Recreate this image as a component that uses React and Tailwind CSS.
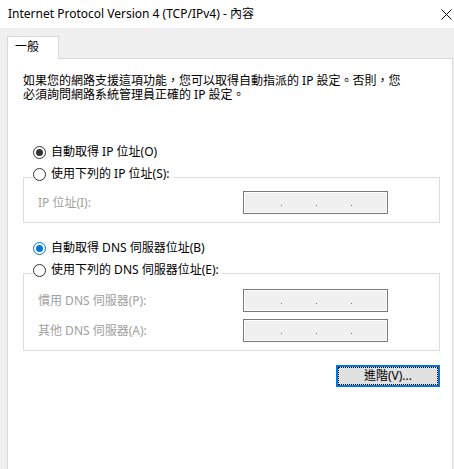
import React from "react";

const font = { fontFamily: '"Noto Sans", "Noto Sans CJK TC", sans-serif' };

const Radio = ({ checked, tone = "dark" }) => {
  const ring = tone === "blue" ? "border-[#0078d7]" : "border-[#333333]";
  const dot = tone === "blue" ? "bg-[#0078d7]" : "bg-[#333333]";
  return (
    <span className={`w-[13px] h-[13px] rounded-full border ${ring} bg-white flex items-center justify-center shrink-0`}>
      {checked && <span className={`w-[7px] h-[7px] rounded-full ${dot}`} />}
    </span>
  );
};

const IpBox = () => (
  <div className="w-[145px] h-[23px] border border-[#7a7a7a] bg-[#f0f0f0] shadow-[inset_0_0_0_1px_#ffffff] flex items-start pt-[13px] pl-[37px] gap-[34px]">
    <span className="w-px h-px bg-[#6d6d6d]" />
    <span className="w-px h-px bg-[#6d6d6d]" />
    <span className="w-px h-px bg-[#6d6d6d]" />
  </div>
);

const FieldRow = ({ label, className = "" }) => (
  <div className={`flex items-center justify-between pl-[14px] pr-[51px] ${className}`}>
    <span className="text-[#a0a0a0] leading-[14px] whitespace-nowrap">{label}</span>
    <IpBox />
  </div>
);

const Legend = ({ children }) => (
  <div className="-mt-[12px] ml-[9px] self-start bg-white h-[16px] flex items-center gap-[5px] pr-[3px]">
    <Radio checked={false} />
    <span className="leading-[14px] whitespace-nowrap">{children}</span>
  </div>
);

const App = () => {
  return (
    <div className="w-[454px] h-[469px] bg-[#f0f0f0] flex flex-col overflow-hidden text-[12px] text-black" style={font}>
      <div className="h-[28px] bg-white flex items-center justify-between pl-[8px] pr-[1px] shrink-0">
        <span className="leading-[14px] whitespace-nowrap">Internet Protocol Version 4 (TCP/IPv4) - 內容</span>
        <svg width="11" height="11" viewBox="0 0 11 11" className="mr-[1px]">
          <path d="M0.5 0.5 L10.5 10.5 M10.5 0.5 L0.5 10.5" stroke="#000" strokeWidth="1" fill="none" />
        </svg>
      </div>

      <div className="flex-1 flex flex-col pl-[7px] pr-[1px] pt-[8px]">
        <div className="relative z-10 w-[52px] h-[23px] -mb-px border border-b-0 border-[#d9d9d9] bg-white pl-[7px] pt-[3px] leading-[14px]">
          一般
        </div>

        <div className="flex-1 flex flex-col border border-b-0 border-[#d9d9d9] bg-white">
          <div className="mt-[15px] ml-[15px] flex flex-col whitespace-nowrap">
            <div className="h-[14px] leading-[14px]">如果您的網路支援這項功能，您可以取得自動指派的 IP 設定。否則，您</div>
            <div className="h-[14px] leading-[14px]">必須詢問網路系統管理員正確的 IP 設定。</div>
          </div>

          <div className="mt-[42px] ml-[25px] h-[16px] flex items-center gap-[5px]">
            <Radio checked />
            <span className="leading-[14px]">自動取得 IP 位址(O)</span>
          </div>

          <div className="mt-[17px] ml-[15px] mr-[12px] border border-[#dcdcdc] pb-[8px] flex flex-col">
            <Legend>使用下列的 IP 位址(S):</Legend>
            <FieldRow label="IP 位址(I):" className="mt-[9px]" />
          </div>

          <div className="mt-[17px] ml-[25px] h-[16px] flex items-center gap-[5px]">
            <Radio checked tone="blue" />
            <span className="leading-[14px]">自動取得 DNS 伺服器位址(B)</span>
          </div>

          <div className="mt-[17px] ml-[15px] mr-[12px] border border-[#dcdcdc] pb-[8px] flex flex-col">
            <Legend>使用下列的 DNS 伺服器位址(E):</Legend>
            <FieldRow label="慣用 DNS 伺服器(P):" className="mt-[11px]" />
            <FieldRow label="其他 DNS 伺服器(A):" className="mt-[7px]" />
          </div>

          <div className="mt-[14px] mr-[12px] flex justify-end">
            <button className="w-[104px] h-[22px] border-2 border-[#0078d7] bg-[#e1e1e1] p-0">
              <div className="w-full h-full border border-dotted border-black flex items-center justify-center leading-[14px]">
                進階(V)...
              </div>
            </button>
          </div>
        </div>
      </div>
    </div>
  );
};

export default App;
